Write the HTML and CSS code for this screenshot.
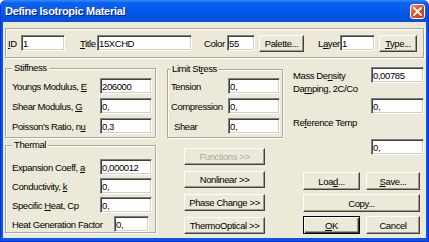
FILE: index.html
```html
<!DOCTYPE html>
<html lang="en">
<head>
  <meta charset="UTF-8">
  <title>Define Isotropic Material</title>
  <link rel="stylesheet" href="styles.css">
</head>
<body>
  <div class="window">
    <div class="titlebar">
      <span class="title">Define Isotropic Material</span>
      <button class="close" aria-label="Close">
        <svg width="9" height="9" viewBox="0 0 9 9"><path d="M1 1L8 8M8 1L1 8" stroke="#fff" stroke-width="1.8" stroke-linecap="square"/></svg>
      </button>
    </div>

    <div class="client">
      <div class="header etched">
        <label class="lbl-id"><u>I</u>D</label>
        <input class="in-id" value="1">
        <label class="lbl-title"><u>T</u>itle</label>
        <input class="in-title" value="15XCHD">
        <label class="lbl-color">Color</label>
        <input class="in-color" value="55">
        <button class="btn btn-palette">Palette...</button>
        <label class="lbl-layer">L<u>a</u>yer</label>
        <input class="in-layer" value="1">
        <button class="btn btn-type"><u>T</u>ype...</button>
      </div>

      <div class="main">
        <div class="col-left">
          <div class="group etched stiffness">
            <div class="legend">Stiffness</div>
            <div class="row"><label>Youngs Modulus, <u>E</u></label><input value="206000"></div>
            <div class="row"><label>Shear Modulus, <u>G</u></label><input value="0,"></div>
            <div class="row"><label>Poisson's Ratio, n<u>u</u></label><input value="0,3"></div>
          </div>

          <div class="group etched thermal">
            <div class="legend">Thermal</div>
            <div class="row"><label>Expansion Coeff, <u>a</u></label><input value="0,000012"></div>
            <div class="row"><label>Conductivity, <u>k</u></label><input value="0,"></div>
            <div class="row"><label>Specific <u>H</u>eat, Cp</label><input value="0,"></div>
            <div class="row heatgen"><label>Heat Generation Factor</label><input value="0,"></div>
          </div>
        </div>

        <div class="col-mid">
          <div class="group etched limits">
            <div class="legend">Limit St<u>r</u>ess</div>
            <div class="row"><label>Tension</label><input value="0,"></div>
            <div class="row"><label>Compression</label><input value="0,"></div>
            <div class="row"><label class="shear">Shear</label><input value="0,"></div>
          </div>

          <div class="mid-buttons">
            <button class="btn" disabled>Functions &gt;&gt;</button>
            <button class="btn">Nonlinear &gt;&gt;</button>
            <button class="btn">Phase Change &gt;&gt;</button>
            <button class="btn">ThermoOptical &gt;&gt;</button>
          </div>
        </div>

        <div class="col-right">
          <div class="prop-row"><label>Mass De<u>n</u>sity</label><input value="0,00785"></div>
          <label class="prop-label">Da<u>m</u>ping, 2C/Co</label>
          <input class="prop-input" value="0,">
          <label class="prop-label">Re<u>f</u>erence Temp</label>
          <input class="prop-input temp" value="0,">

          <div class="btn-grid">
            <button class="btn">Loa<u>d</u>...</button>
            <button class="btn"><u>S</u>ave...</button>
            <button class="btn wide">Cop<u>y</u>...</button>
            <button class="btn default"><u>O</u>K</button>
            <button class="btn">Cancel</button>
          </div>
        </div>
      </div>
    </div>
  </div>
</body>
</html>
```

FILE: styles.css
```css
* {
  box-sizing: border-box;
}
body {
  margin: 0;
  font-family: "Liberation Sans", Arial, sans-serif;
  font-size: 9.5px;
  letter-spacing: -0.4px;
  color: #000;
  background: #fff;
  white-space: nowrap;
}
u {
  text-decoration: underline;
  text-underline-offset: 1px;
}

/* window frame */
.window {
  width: 429px;
  height: 242px;
  background: #0a56e4;
  border: 1px solid #0831d9;
  border-top: none;
  border-radius: 6px 6px 0 0;
  overflow: hidden;
}
.titlebar {
  height: 22px;
  margin: 0 -1px;
  padding: 0 4px 0 5px;
  display: flex;
  align-items: center;
  justify-content: space-between;
  background: linear-gradient(#3a8cfa 0, #0b63f0 12%, #0358e9 55%, #0451dc 100%);
}
.title {
  color: #fff;
  font-size: 11px;
  font-weight: bold;
  letter-spacing: -0.3px;
  text-shadow: 1px 1px 0 #0a1f8a;
}
.close {
  width: 15px;
  height: 15px;
  padding: 0;
  display: flex;
  align-items: center;
  justify-content: center;
  background: linear-gradient(135deg, #f0906a, #e0502c 45%, #c93a14);
  border: 1px solid #fff;
  border-radius: 3px;
}
.client {
  height: 216px;
  margin: 0 2px;
  padding: 6px 2px 0 2px;
  background: #ece9d8;
}

/* 3d bits */
.etched {
  border: 1px solid #aca899;
  box-shadow: inset 1px 1px 0 #fff, 1px 1px 0 #fff;
}
input {
  height: 16px;
  padding: 0 1px;
  font: inherit;
  letter-spacing: inherit;
  color: #000;
  background: #fff;
  border: 1px solid;
  border-color: #7f7f7f #fff #fff #7f7f7f;
  box-shadow: inset 1px 1px 0 #404040, inset -1px -1px 0 #d4d0c8;
  outline: none;
}
.btn {
  height: 17px;
  padding: 0;
  font: inherit;
  letter-spacing: inherit;
  color: #000;
  background: #ece9d8;
  border: 1px solid;
  border-color: #fff #404040 #404040 #fff;
  box-shadow: inset -1px -1px 0 #9d9a8c;
}
.btn:disabled {
  color: #aca899;
}
.btn.default {
  border-color: #000;
  box-shadow: inset 1px 1px 0 #fff, inset -1px -1px 0 #404040, inset -2px -2px 0 #9d9a8c;
}

/* top row */
.header {
  height: 30px;
  padding-left: 2px;
  display: flex;
  align-items: center;
}
.lbl-id { width: 13px; }
.in-id { width: 44px; }
.lbl-title { width: 17px; margin-left: 15px; }
.in-title { width: 95px; }
.lbl-color { width: 23px; margin-left: 12px; }
.in-color { width: 28px; }
.btn-palette { width: 45px; margin-left: 4px; }
.lbl-layer { width: 22px; margin-left: 14px; }
.in-layer { width: 35px; }
.btn-type { width: 38px; margin-left: 4px; }

/* group boxes */
.main {
  display: flex;
  align-items: flex-start;
}
.group {
  padding: 0 3px 3px 6px;
}
.legend {
  width: max-content;
  margin-top: -7px;
  padding: 0 2px;
  line-height: 12px;
  background: #ece9d8;
}
.row {
  height: 16px;
  margin-top: 4px;
  display: flex;
  align-items: center;
  justify-content: space-between;
}
.row input {
  width: 52px;
}

.col-left {
  width: 151px;
  margin-top: 10px;
}
.stiffness .legend + .row {
  margin-top: 4px;
}
.thermal {
  margin-top: 7px;
  padding-bottom: 0;
}
.thermal .row {
  margin-top: 3px;
}
.thermal .legend + .row {
  margin-top: 8px;
}
.heatgen {
  padding-right: 3px;
}
.heatgen input {
  width: 35px;
}

.col-mid {
  width: 116px;
  margin-left: 11px;
  margin-top: 11px;
}
.limits {
  padding-left: 3px;
  padding-right: 2px;
}
.limits .legend {
  padding: 0 1px;
}
.limits .legend + .row {
  margin-top: 3px;
}
.shear {
  margin-left: 3px;
}
.mid-buttons {
  margin: 10px 0 0 17px;
  width: 81px;
  display: flex;
  flex-direction: column;
  gap: 6px;
}

.col-right {
  width: 131px;
  margin-left: 10px;
  margin-top: 9px;
  display: flex;
  flex-direction: column;
}
.prop-row {
  display: flex;
  align-items: center;
  justify-content: space-between;
}
.prop-row input,
.prop-input {
  width: 53px;
}
.prop-label {
  line-height: 12px;
}
.prop-input {
  align-self: flex-end;
  margin: 3px 0;
}
.prop-input.temp {
  margin-top: 10px;
}
.btn-grid {
  margin-top: 14px;
  padding-left: 10px;
  display: grid;
  grid-template-columns: 57px 54px;
  gap: 4px 6px;
}
.btn-grid .btn {
  height: 18px;
}
.btn-grid .wide {
  grid-column: 1 / 3;
}
```
